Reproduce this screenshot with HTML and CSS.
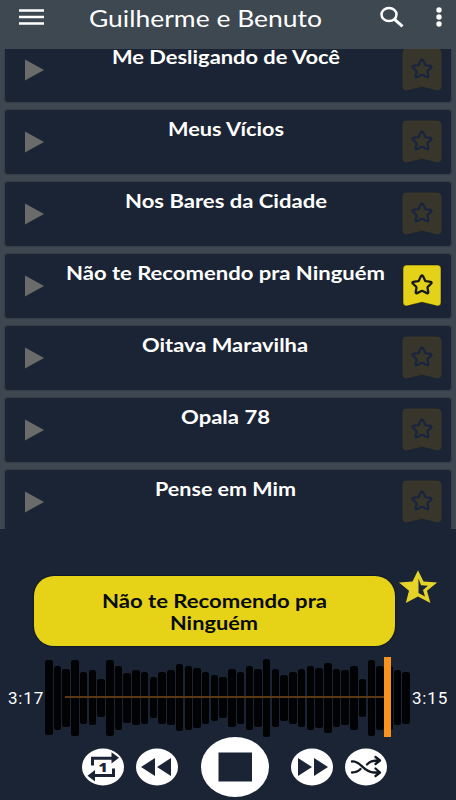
FILE: index.html
```html
<!DOCTYPE html>
<html lang="pt">
<head>
<meta charset="utf-8">
<title>Guilherme e Benuto</title>
<link rel="stylesheet" href="styles.css">
</head>
<body>
<svg class="defs" aria-hidden="true">
  <symbol id="play" viewBox="0 0 20 22"><path d="M0 .5 19 11 0 21.500Z" fill="#6c6b6c"/></symbol>
  <symbol id="mark" viewBox="0 0 40 43">
    <path class="ribbon" d="M4.500 1h31q3.500 0 3.500 3.500v34q0 3.500-3.500 3.500-1 0-3-.7L20 38.200 7.500 41.300q-2 .7-3 .7Q1 42 1 38.500v-34Q1 1 4.500 1Z"/>
    <path class="outline" d="M20 11.500q.8 0 1.100.8l2.100 4.400q.2.400.7.500l4.800.7q1.500.4.500 1.600l-3.400 3.300q-.4.400-.3.900l.8 4.400q.1 1.600-1.400 1L20.600 27q-.6-.3-1.200 0l-4.300 2.100q-1.500.6-1.400-1l.8-4.400q.1-.5-.3-.9l-3.400-3.300q-1-1.200.5-1.600l4.800-.7q.5-.1.7-.5l2.100-4.400q.3-.8 1.100-.8Z"/>
  </symbol>
</svg>
<header class="bar">
  <svg class="menu" viewBox="0 0 25 16"><path d="M0 1.500h25M0 8h25M0 14.500h25" stroke="#fff" stroke-width="2.300"/></svg>
  <svg class="heading" viewBox="0 0 234 34"><text x="0" y="23" textLength="233" lengthAdjust="spacingAndGlyphs">Guilherme e Benuto</text></svg>
  <svg class="search" viewBox="0 0 24 22"><ellipse cx="9" cy="7.500" rx="7.500" ry="6.500" fill="none" stroke="#fff" stroke-width="2.500"/><path d="m14.500 12.300 8 7" stroke="#fff" stroke-width="3"/></svg>
  <svg class="more" viewBox="0 0 6 20"><circle cx="3" cy="3" r="2.700"/><circle cx="3" cy="10" r="2.700"/><circle cx="3" cy="17" r="2.700"/></svg>
</header>
<main class="list" id="list"></main>
<section class="player">
  <div class="now">
    <div class="pill">
      <svg viewBox="0 0 360 70"><text x="68" y="31.500" textLength="225" lengthAdjust="spacingAndGlyphs">Não te Recomendo pra</text><text x="136" y="53.500" textLength="88" lengthAdjust="spacingAndGlyphs">Ninguém</text></svg>
    </div>
    <svg class="star" viewBox="0 0 40 34"><path fill-rule="evenodd" d="M20 .3 25.500 11.500 39.200 12.500 29 20.700 32.400 33 20 26.500 7.800 33 11 20.700 1 12.500 14.500 11.500ZM20.500 8.500V23l6.500 3.500-2-6.500 5-4.300-7-.5Z"/></svg>
  </div>
  <div class="timeline">
    <span class="time">3:17</span>
    <div class="wave" id="wave"><i class="line"></i><i class="cursor"></i></div>
    <span class="time">3:15</span>
  </div>
  <div class="controls">
    <svg class="btn repeat" viewBox="0 0 42 38"><ellipse cx="21" cy="19" rx="21" ry="18.500"/><path d="M10.500 17.500V10.200H31M31.500 20.500v7H12" fill="none" stroke="#1b2434" stroke-width="3"/><path d="M29.500 4.200 37 9.800l-7.500 5.700ZM13 22 5.500 27.700l7.500 5.700Z" fill="#1b2434"/><text x="16.500" y="23.500" textLength="9" lengthAdjust="spacingAndGlyphs">1</text></svg>
    <svg class="btn rewind" viewBox="0 0 42 38"><ellipse cx="21" cy="19" rx="21" ry="18.500"/><path d="M5 19 19 10v18ZM21 19l14-9v18Z" fill="#1b2434"/></svg>
    <svg class="stop" viewBox="0 0 68 60"><ellipse cx="34" cy="30" rx="34" ry="30"/><path d="M17.500 15.500H51v29H17.500Z" fill="#1b2434"/></svg>
    <svg class="btn forward" viewBox="0 0 42 38"><ellipse cx="21" cy="19" rx="21" ry="18.500"/><path d="m7 10 14 9-14 9ZM23 10l14 9-14 9Z" fill="#1b2434"/></svg>
    <svg class="btn" viewBox="0 0 42 38"><ellipse cx="21" cy="19" rx="21" ry="18.500"/><path d="M7 13.500C16 12.500 18 24.500 29 24.500h6M7 24.500c4 0 6-1 8.500-3.500M22 16.500c3-3 5-4 12.500-4M30.500 9l4.500 3.500-4.500 3.500M30.500 20.500l4.500 4-4.500 3.500" fill="none" stroke="#111923" stroke-width="2.300" stroke-linecap="round" stroke-linejoin="round"/></svg>
  </div>
</section>
<script src="app.js"></script>
</body>
</html>
```
FILE: styles.css
```css
* { box-sizing: border-box; }
body {
  margin: 0;
  width: 456px;
  height: 800px;
  overflow: hidden;
  display: flex;
  flex-direction: column;
  background: #1b2434;
  color: #fff;
  font-family: Lato, "Open Sans", sans-serif;
}
svg { display: block; flex: none; overflow: visible; }
.defs { width: 0; height: 0; position: absolute; }
.bar {
  flex: none;
  height: 49px;
  display: flex;
  align-items: flex-start;
  background: #3e4851;
}
.menu { width: 25px; height: 16px; margin: 9px 0 0 19px; }
.heading {
  width: 234px;
  height: 34px;
  margin: 4px 0 0 45px;
  fill: #fff;
  font-size: 23.5px;
}
.search { width: 24px; height: 22px; margin: 7px 0 0 57px; }
.more { width: 6px; height: 20px; margin: 7px 0 0 31.5px; fill: #fff; }
.list {
  flex: none;
  height: 480px;
  overflow: hidden;
  display: flex;
  flex-direction: column;
  justify-content: flex-end;
  gap: 8px;
  padding: 0 5px;
  background: #3e464f;
}
.row {
  flex: none;
  height: 64px;
  display: flex;
  align-items: flex-start;
  padding: 0 9px 0 20px;
  background: #1b2434;
  border-radius: 3px;
  box-shadow: 0 0 2px #29323e;
}
.row:last-child { height: 59px; border-radius: 3px 3px 0 0; }
.play { width: 20px; height: 22px; margin-top: 20.5px; }
.title {
  width: 357px;
  height: 40px;
  fill: #fff;
  font-size: 19.5px;
  font-weight: 700;
}
.mark { width: 40px; height: 43px; margin-top: 10px; }
.ribbon { fill: var(--ribbon); stroke: var(--edge); stroke-width: .5; }
.outline { fill: none; stroke: var(--star); stroke-width: var(--weight); }
.mark { --ribbon: #38362b; --edge: #45401f; --star: #172440; --weight: 2.1; }
.mark.on { --ribbon: #e4d218; --edge: #111; --star: #15191d; --weight: 2.3; }
.player { flex: none; height: 271px; padding-top: 47px; }
.now { display: flex; height: 81px; padding-left: 34px; align-items: flex-start; }
.pill {
  width: 361px;
  height: 70px;
  border-radius: 20px;
  background: #e6d317;
  box-shadow: 0 0 1px 1px #111827;
}
.pill svg { width: 360px; height: 70px; fill: #080b0d; font-size: 18.5px; font-weight: 700; }
.star { width: 40px; height: 34px; margin: -6px 0 0 3px; fill: #e6d32a; }
.timeline { display: flex; height: 80px; align-items: center; }
.time {
  width: 45px;
  padding: 1px 0 0 8px;
  font: 17px/20px Roboto, sans-serif;
  letter-spacing: .8px;
}
.wave {
  position: relative;
  flex: none;
  width: 366px;
  height: 80px;
  display: flex;
  align-items: center;
  gap: 1.23px;
  padding-top: 1px;
}
.wave b { flex: none; width: 7.5px; border-radius: 2.5px; background: #010203; }
.line { position: absolute; left: 20px; top: 39px; width: 326px; height: 2px; background: #5b3714; }
.cursor { position: absolute; left: 339px; top: 0; width: 7px; height: 80px; background: #f7931e; }
.timeline .time:last-child { padding-left: 1px; }
.controls { display: flex; align-items: center; height: 60px; padding-left: 82px; fill: #fff; }
.btn { width: 42px; height: 38px; }
.repeat { margin-right: 12px; }
.repeat text { fill: #1b2434; font: 800 13px "Open Sans", sans-serif; }
.stop { width: 68px; height: 60px; margin: 0 22px 0 22.5px; }
.forward { margin-right: 12px; }
```
FILE: app.js
```js
// Each song carries the left edge and width of its title inside the card.
const songs = [
  ["Me Desligando de Você", 112, 228],
  ["Meus Vícios", 168, 116],
  ["Nos Bares da Cidade", 125, 202],
  ["Não te Recomendo pra Ninguém", 66, 319],
  ["Oitava Maravilha", 142, 166],
  ["Opala 78", 181, 89],
  ["Pense em Mim", 155, 141]
];
document.getElementById("list").innerHTML = songs.map(([name, x, w], i) => `
  <article class="row">
    <svg class="play"><use href="#play"/></svg>
    <svg class="title" viewBox="0 0 357 40"><text x="${x - 45}" y="26" textLength="${w}" lengthAdjust="spacingAndGlyphs">${name}</text></svg>
    <svg class="mark${i === 3 ? " on" : ""}"><use href="#mark"/></svg>
  </article>`).join("");

const heights = [75,64,58,76,52,55,38,76,64,50,55,52,41,52,55,67,64,60,52,46,41,
  58,52,64,58,78,58,46,52,58,64,60,70,58,55,64,38,76,64,64,55,52];
document.getElementById("wave").insertAdjacentHTML("afterbegin",
  heights.map(h => `<b style="height:${h}px"></b>`).join(""));
```
